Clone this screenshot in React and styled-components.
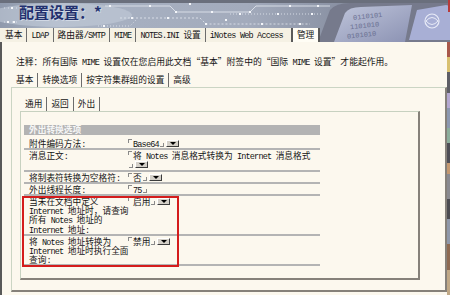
import React from "react";
import styled, { createGlobalStyle, css } from "styled-components";

const GlobalStyle = createGlobalStyle`
  html, body {
    margin: 0;
    padding: 0;
    background: #fcf8ee;
  }
  body {
    font-family: "Noto Sans CJK SC", "Liberation Sans", sans-serif;
    font-size: 8.7px;
    color: #141414;
  }
`;

// ascii runs get a narrow mono face, like the old bitmap font
const splitLatin = (text) =>
  text.split(/([\x20-\x7e]+)/).map((part, i) =>
    i % 2 ? <Latin key={i}>{part}</Latin> : part
  );

const Txt = ({ children }) => <>{splitLatin(String(children))}</>;

const topTabs = ["基本", "LDAP", "路由器/SMTP", "MIME", "NOTES.INI 设置", "iNotes Web Access"];
const subTabs = ["基本", "转换选项", "按字符集群组的设置", "高级"];
const innerTabs = ["通用", "返回", "外出"];

const dots = [
  [12, 8], [22, 8], [32, 8], [8, 22], [14, 22], [110, 6], [150, 6], [176, 12], [212, 12],
  [250, 12], [290, 6], [318, 6], [132, 18], [168, 18], [206, 24], [262, 24], [300, 24],
  [104, 26], [240, 14], [278, 14], [312, 14], [190, 4], [226, 20],
];

const Banner = () => (
  <BannerArt viewBox="0 0 450 42" preserveAspectRatio="none" aria-hidden="true">
    <defs>
      <linearGradient id="sky" x1="0" x2="1" y1="0" y2="0">
        <stop offset="0" stopColor="#8f99ac" />
        <stop offset="0.12" stopColor="#a8b2c3" />
        <stop offset="0.55" stopColor="#a3abbc" />
        <stop offset="0.7" stopColor="#9098aa" />
        <stop offset="1" stopColor="#6c7082" />
      </linearGradient>
      <linearGradient id="screen" x1="0" y1="0" x2="1" y2="1">
        <stop offset="0" stopColor="#c6cce2" />
        <stop offset="1" stopColor="#8d94b6" />
      </linearGradient>
    </defs>
    <rect width="450" height="42" fill="url(#sky)" />
    <rect width="450" height="3" fill="#6a6f7c" />
    <ellipse cx="60" cy="15" rx="72" ry="12" fill="#c5cdda" opacity="0.55" />
    <g stroke="#e1e6ee" strokeWidth="1" fill="none" opacity="0.85">
      <path d="M4 8 H40 M4 22 H18" strokeDasharray="1 3" />
      <path d="M105 6 H170 L176 12 H250 L256 6 H330" />
      <path d="M120 18 H200 L206 24 H310" strokeDasharray="2 2" />
      <path d="M98 26 H130 L136 20 M230 14 H322" strokeDasharray="1 2" />
    </g>
    <g fill="#f4f6fa">
      {dots.map(([x, y]) => (
        <rect key={`${x}-${y}`} x={x - 1} y={y - 1} width="2" height="2" />
      ))}
    </g>
    <path d="M318 42 L330 10 Q336 3 350 3 H450 V42 Z" fill="#767a8c" />
    <path d="M334 42 L345 13 Q349 7 361 7 L412 5 L405 42 Z" fill="url(#screen)" opacity="0.92" />
    <g fill="#6a7092" fontFamily="Liberation Mono, monospace" fontSize="7" transform="rotate(-6 372 26)">
      <text x="354" y="18">0110101</text>
      <text x="350" y="27">1101010</text>
      <text x="346" y="36">0101010</text>
    </g>
    <path d="M409 40 L417 10 L446 5 L450 6 V40 Z" fill="#a8afd5" />
    <circle cx="432" cy="21" r="7" stroke="#e8ebf7" fill="none" strokeWidth="1.2" />
    <path d="M426 21 Q432 14 438 21 Q432 28 426 21" stroke="#e8ebf7" fill="none" />
    <rect x="448" y="0" width="2" height="12" fill="#b83a3a" />
  </BannerArt>
);

const Field = ({ children, drop = true }) => (
  <Value>
    <MarkOpen />
    <Txt>{children}</Txt>
    <Tail>
      <MarkClose />
      {drop && <Drop />}
    </Tail>
  </Value>
);

const Row = ({ label, children }) => (
  <RowBox>
    <Label>
      {label.map((line) => (
        <div key={line}>
          <Txt>{line}</Txt>
        </div>
      ))}
    </Label>
    <div>{children}</div>
  </RowBox>
);

const App = () => {
  return (
    <Page>
      <GlobalStyle />
      <Header>
        <Banner />
        <Title>配置设置：*</Title>
        <TopBar>
          {topTabs.map((t) => (
            <TabItem key={t}>
              <Txt>{t}</Txt>
            </TabItem>
          ))}
          <TabItem $active>管理</TabItem>
        </TopBar>
      </Header>

      <Body>
        <Note>
          <Txt>注释：所有国际 MIME 设置仅在您启用此文档“基本”附签中的“国际 MIME 设置”才能起作用。</Txt>
        </Note>
        <TabStrip $indent={10}>
          {subTabs.map((t) => (
            <TabItem key={t}>{t}</TabItem>
          ))}
        </TabStrip>

        <Panel>
          <TabStrip $indent={1}>
            {innerTabs.map((t) => (
              <TabItem key={t} $last={t === "外出"}>
                {t}
              </TabItem>
            ))}
          </TabStrip>

          <InnerBox>
            <Table>
              <SectionHead>外出转换选项</SectionHead>
              <Row label={["附件编码方法:"]}>
                <Field>Base64</Field>
              </Row>
              <Row label={["消息正文:"]}>
                <Field>将 Notes 消息格式转换为 Internet 消息格式</Field>
              </Row>
              <Row label={["将制表符转换为空格符:"]}>
                <Field>否</Field>
              </Row>
              <Row label={["外出线程长度:"]}>
                <Field drop={false}>75</Field>
              </Row>
              <Highlight>
                <Row label={["当未在文档中定义", "Internet 地址时，请查询", "所有 Notes 地址的", "Internet 地址:"]}>
                  <Field>启用</Field>
                </Row>
                <Row label={["将 Notes 地址转换为", "Internet 地址时执行全面", "查询:"]}>
                  <Field>禁用</Field>
                </Row>
              </Highlight>
            </Table>
          </InnerBox>
        </Panel>
      </Body>
    </Page>
  );
};

const Page = styled.div`
  width: 450px;
  height: 295px;
  overflow: hidden;
  display: flex;
  flex-direction: column;
  background: #fcf8ee;
`;

const Header = styled.header`
  position: relative;
  flex: none;
  height: 42px;
  display: flex;
  flex-direction: column;
`;

const BannerArt = styled.svg`
  position: absolute;
  inset: 0;
  width: 100%;
  height: 100%;
`;

const Title = styled.div`
  position: relative;
  height: 28px;
  padding-left: 19px;
  font-family: "Noto Sans CJK SC", sans-serif;
  font-size: 15px;
  font-weight: 700;
  line-height: 24px;
  color: #22306e;
  text-shadow: 1px 1px 0 rgba(228, 234, 244, 0.6);
`;

const TopBar = styled.nav`
  position: relative;
  align-self: flex-start;
  display: flex;
  height: 14px;
  padding-left: 1px;
  background: #f5f1e4;
`;

const TabItem = styled.span`
  padding: 0 4px;
  line-height: 14px;
  white-space: nowrap;
  border-left: 1px solid #6c6c6c;
  &:first-child {
    border-left: 0;
  }
  ${(p) =>
    p.$last &&
    css`
      border-right: 1px solid #6c6c6c;
    `}
  ${(p) =>
    p.$active &&
    css`
      margin-left: 4px;
      padding: 0 4px;
      background: #fffdf5;
      border-left: 2px solid #5a5a5a;
      border-right: 2px solid #5a5a5a;
    `}
`;

const Body = styled.main`
  flex: 1;
  display: flex;
  flex-direction: column;
  padding: 14px 3px 0 0;
  border-left: 2px solid #595959;
  background: linear-gradient(
      #a8584a 0 6%,
      #d8c070 6% 12%,
      #5e5e66 12% 20%,
      #b4a8d0 20% 26%,
      #8c98b0 26% 34%,
      #8cae9c 34% 40%,
      #4e4e56 40% 48%,
      #c49870 48% 52%,
      #8a8a90 52% 62%,
      #4c4c52 62% 70%,
      #8f98aa 70% 80%,
      #8e6a52 80% 90%,
      #c0a886 90% 100%
    )
    right / 3px 100% no-repeat,
    #fcf8ee;
`;

const Note = styled.p`
  margin: 0 0 5px 14px;
  line-height: 12px;
  font-size: 8.8px;
  white-space: nowrap;
`;

const TabStrip = styled.div`
  display: flex;
  margin-left: ${(p) => p.$indent}px;
  height: 14px;
`;

const Panel = styled.section`
  margin-left: 9px;
  padding: 9px 25px 10px 8px;
  border-top: 1px solid #cbd5c4;
  border-left: 1px solid #cbd5c4;
  border-right: 2px solid #86817a;
  border-bottom: 2px solid #86817a;
`;

const InnerBox = styled.div`
  padding: 13px 0 12px 3px;
  border-top: 1px solid #c7d1c0;
  border-left: 1px solid #c7d1c0;
  border-right: 2px solid #86817a;
  border-bottom: 2px solid #86817a;
`;

const Table = styled.div`
  width: 296px;
`;

const SectionHead = styled.div`
  height: 10px;
  margin-bottom: 3px;
  padding-left: 5px;
  line-height: 10px;
  background: #b3b3b3;
  color: #f6f6f6;
  font-weight: bold;
`;

const RowBox = styled.div`
  display: grid;
  grid-template-columns: 104px 1fr;
  line-height: 9.2px;
  padding-top: 1px;
  border-bottom: 2px solid;
  border-image: linear-gradient(#5e5e5e 50%, #b4b4b4 50%) 1;
`;

const Label = styled.div`
  padding-left: 5px;
  white-space: nowrap;
`;

const Value = styled.div`
  white-space: normal;
`;

const Latin = styled.span`
  font-family: "Liberation Mono", monospace;
  font-size: 8.5px;
  line-height: 0;
  letter-spacing: -0.8px;
`;

const MarkOpen = styled.span`
  display: inline-block;
  width: 3px;
  height: 3px;
  margin-right: 1px;
  vertical-align: 4px;
  border-top: 1px solid #8a8a8a;
  border-left: 1px solid #8a8a8a;
`;

const Tail = styled.span`
  white-space: nowrap;
`;

const MarkClose = styled.span`
  display: inline-block;
  width: 3px;
  height: 3px;
  margin: 0 2px 0 1px;
  vertical-align: 0;
  border-bottom: 1px solid #8a8a8a;
  border-right: 1px solid #8a8a8a;
`;

const Drop = styled.span`
  position: relative;
  display: inline-block;
  width: 11px;
  height: 5px;
  vertical-align: 0;
  background: #d4d0c8;
  border: 1px solid;
  border-color: #ffffff #3c3c3c #3c3c3c #ffffff;
  &::after {
    content: "";
    position: absolute;
    left: 3px;
    top: 1px;
    border-left: 3px solid transparent;
    border-right: 3px solid transparent;
    border-top: 3px solid #000;
  }
`;

const Highlight = styled.div`
  position: relative;
  &::after {
    content: "";
    position: absolute;
    left: -2px;
    top: 0;
    bottom: -1px;
    width: 153px;
    border: 2px solid #d41c1c;
    pointer-events: none;
  }
`;

export default App;
